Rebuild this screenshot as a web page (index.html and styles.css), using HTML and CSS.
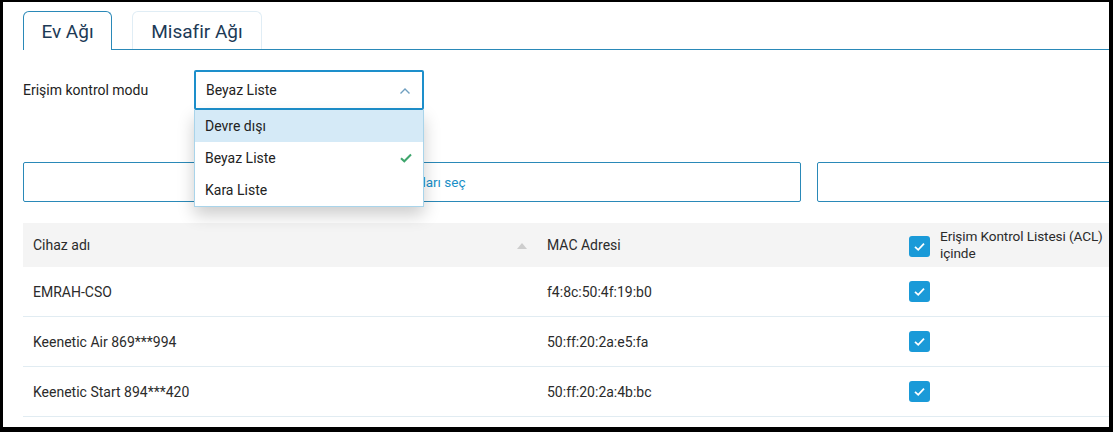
FILE: index.html
```html
<!DOCTYPE html>
<html lang="tr">
<head>
<meta charset="utf-8">
<link rel="stylesheet" href="styles.css">
</head>
<body>
<div class="frame">
  <div class="tabs">
    <div class="tab active">Ev Ağı</div>
    <div class="tab">Misafir Ağı</div>
  </div>

  <div class="form-row">
    <div class="label">Erişim kontrol modu</div>
    <div class="select">
      <span>Beyaz Liste</span>
      <svg class="chev" width="12" height="8" viewBox="0 0 12 8"><polyline points="1.5,6.5 6,2 10.5,6.5" fill="none" stroke="#6f9fc0" stroke-width="1.4"/></svg>
      <div class="menu">
        <div class="item hl">Devre dışı</div>
        <div class="item">Beyaz Liste
          <svg class="ok" width="12" height="10" viewBox="0 0 12 10"><polyline points="1,5.2 4.3,8.3 11,1.5" fill="none" stroke="#3ea56c" stroke-width="2"/></svg>
        </div>
        <div class="item">Kara Liste</div>
      </div>
    </div>
  </div>

  <div class="boxes">
    <div class="box"><span class="link">Tüm cihazları seç</span></div>
    <div class="box"></div>
  </div>

  <div class="table">
    <div class="tr head">
      <div class="td c1">Cihaz adı
        <svg class="sort" width="12" height="8" viewBox="0 0 12 8"><polygon points="6,1 11,7 1,7" fill="#cdcdcd"/></svg>
      </div>
      <div class="td">MAC Adresi</div>
      <div class="td acl">
        <svg class="cb" width="21" height="21" viewBox="0 0 21 21"><rect width="21" height="21" rx="3" fill="#1a9ad8"/><polyline points="6,10.8 9.2,13.8 15,7.6" fill="none" stroke="#fff" stroke-width="1.8"/></svg>
        <span class="acl-text">Erişim Kontrol Listesi (ACL)<br>içinde</span>
      </div>
    </div>
    <div class="tr">
      <div class="td">EMRAH-CSO</div>
      <div class="td">f4:8c:50:4f:19:b0</div>
      <div class="td acl"><svg class="cb" width="21" height="21" viewBox="0 0 21 21"><rect width="21" height="21" rx="3" fill="#1a9ad8"/><polyline points="6,10.8 9.2,13.8 15,7.6" fill="none" stroke="#fff" stroke-width="1.8"/></svg></div>
    </div>
    <div class="tr">
      <div class="td">Keenetic Air 869***994</div>
      <div class="td">50:ff:20:2a:e5:fa</div>
      <div class="td acl"><svg class="cb" width="21" height="21" viewBox="0 0 21 21"><rect width="21" height="21" rx="3" fill="#1a9ad8"/><polyline points="6,10.8 9.2,13.8 15,7.6" fill="none" stroke="#fff" stroke-width="1.8"/></svg></div>
    </div>
    <div class="tr">
      <div class="td">Keenetic Start 894***420</div>
      <div class="td">50:ff:20:2a:4b:bc</div>
      <div class="td acl"><svg class="cb" width="21" height="21" viewBox="0 0 21 21"><rect width="21" height="21" rx="3" fill="#1a9ad8"/><polyline points="6,10.8 9.2,13.8 15,7.6" fill="none" stroke="#fff" stroke-width="1.8"/></svg></div>
    </div>
  </div>
</div>
</body>
</html>
```

FILE: styles.css
```css
* { box-sizing: border-box; }
html, body { margin: 0; padding: 0; background: #000; }
body { font-family: Roboto, "Liberation Sans", sans-serif; color: #2b2b2b; }

.frame {
  margin: 2px 4px 0 3px;
  height: 425px;
  background: #fff;
  overflow: hidden;
  position: relative;
  padding-left: 20px;
}

.tabs {
  display: flex;
  align-items: flex-end;
  gap: 20px;
  padding-top: 9px;
  border-bottom: 1px solid #2a89b8;
}
.tab {
  height: 38px;
  width: 130px;
  border: 1px solid #e0edf5;
  border-bottom: 0;
  border-radius: 6px 6px 0 0;
  background: #fff;
  display: flex;
  align-items: center;
  justify-content: center;
  font-size: 19px;
  color: #1c3a56;
  padding-top: 2px;
}
.tab.active {
  width: 89px;
  height: 39px;
  margin-bottom: -1px;
  border-color: #2a89b8;
  padding-top: 1px;
}

.form-row {
  display: flex;
  align-items: center;
  margin-top: 20px;
  position: relative;
  z-index: 2;
}
.label { width: 171px; font-size: 14px; color: #222; }
.select {
  position: relative;
  width: 230px;
  height: 40px;
  border: 2px solid #1d8fcb;
  border-radius: 2px;
  padding: 0 10px;
  display: flex;
  align-items: center;
  justify-content: space-between;
  font-size: 14px;
  color: #222;
}
.chev { margin-right: 1px; margin-top: 2px; }
.menu {
  position: absolute;
  top: 38px;
  left: -2px;
  width: 230px;
  background: #fff;
  border: 1px solid #a9d4ea;
  border-top: 0;
  box-shadow: 0 8px 16px rgba(0, 0, 0, 0.2);
}
.item {
  height: 32px;
  padding: 0 11px 0 10px;
  display: flex;
  align-items: center;
  justify-content: space-between;
  font-size: 14px;
  color: #222;
}
.item.hl { background: #d5eaf7; }

.boxes {
  display: grid;
  grid-template-columns: 778px 778px;
  gap: 16px;
  margin-top: 52px;
}
.box {
  height: 40px;
  border: 1px solid #2a89b8;
  border-radius: 2px;
  display: flex;
  align-items: center;
  justify-content: center;
}
.link { font-size: 13.5px; color: #1a8fc7; padding-left: 2px; }

.table { margin-top: 21px; font-size: 14px; color: #2b2b2b; }
.tr {
  display: grid;
  grid-template-columns: 514px 362px 1fr;
  height: 50px;
  border-bottom: 1px solid #e1ecf2;
}
.tr.head {
  height: 44px;
  background: #f4f4f4;
  border-bottom: 0;
}
.td {
  display: flex;
  align-items: center;
  padding-left: 10px;
  white-space: nowrap;
}
.c1 { justify-content: space-between; padding-right: 9px; }
.sort { margin-top: 2px; }
.acl { gap: 10px; }
.cb { flex: none; }
.head .cb { margin-top: 2px; }
.acl-text { line-height: 17px; font-size: 13.6px; letter-spacing: -0.1px; }
```
